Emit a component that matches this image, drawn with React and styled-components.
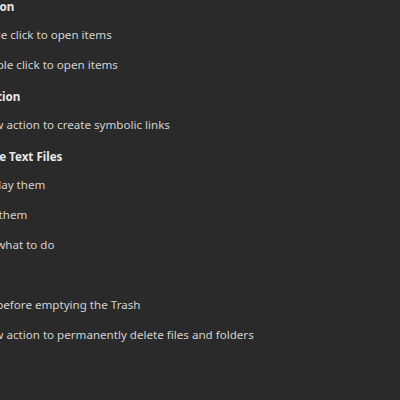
import React from "react";
import styled, { createGlobalStyle } from "styled-components";

const Global = createGlobalStyle`
  html, body { margin: 0; padding: 0; background: #2a2a2a; }
  body { width: 400px; height: 400px; overflow: hidden; }
`;

const Page = styled.div`
  width: 400px;
  height: 400px;
  background: #2a2a2a;
  overflow: hidden;
  font-family: "Noto Sans", "Open Sans", sans-serif;
  font-size: 11.6px;
  color: #d2d2d2;
`;

const Content = styled.div`
  margin-top: -7px;
  margin-left: -57px;
  display: flex;
  flex-direction: column;
  gap: 4px;
`;

const Section = styled.section`
  display: flex;
  flex-direction: column;
`;

const Heading = styled.div`
  height: 26px;
  display: flex;
  align-items: center;
  font-weight: 700;
  color: #e8e8e8;
  white-space: nowrap;
`;

const Option = styled.div`
  height: 30px;
  display: flex;
  align-items: center;
  padding-left: 31px;
  white-space: nowrap;
`;

const sections = [
  { title: "Open Action", items: ["Single click to open items", "Double click to open items"] },
  { title: "Link Creation", items: ["Show action to create symbolic links"] },
  { title: "Executable Text Files", items: ["Display them", "Run them", "Ask what to do"] },
  { title: "Trash", items: ["Ask before emptying the Trash", "Show action to permanently delete files and folders"] },
];

export default function App() {
  return (
    <Page>
      <Global />
      <Content>
        {sections.map((s) => (
          <Section key={s.title}>
            <Heading>{s.title}</Heading>
            {s.items.map((i) => (
              <Option key={i}>{i}</Option>
            ))}
          </Section>
        ))}
      </Content>
    </Page>
  );
}
